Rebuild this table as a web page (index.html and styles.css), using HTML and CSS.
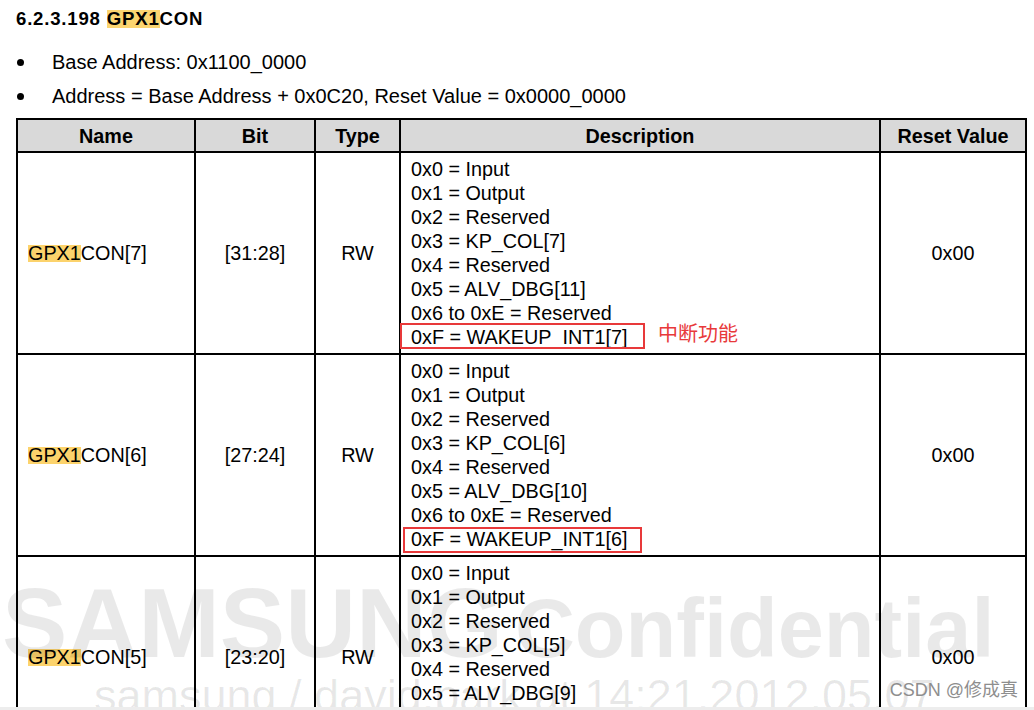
FILE: index.html
```html
<!DOCTYPE html>
<html lang="en">
<head>
<meta charset="utf-8">
<title>GPX1CON</title>
<link rel="stylesheet" href="styles.css">
</head>
<body>
<h1 class="title">6.2.3.198 <span class="hl hl-title">GPX1</span>CON</h1>
<ul class="facts">
  <li class="fact"><span class="dot"></span><span>Base Address: 0x1100_0000</span></li>
  <li class="fact"><span class="dot"></span><span>Address = Base Address + 0x0C20, Reset Value = 0x0000_0000</span></li>
</ul>
<table class="reg">
  <thead>
    <tr>
      <th class="c-name">Name</th>
      <th class="c-bit">Bit</th>
      <th class="c-type">Type</th>
      <th class="c-desc">Description</th>
      <th class="c-reset">Reset Value</th>
    </tr>
  </thead>
  <tbody>
    <tr>
      <td class="name"><span class="hl">GPX1</span>CON[7]</td>
      <td class="mid">[31:28]</td>
      <td class="mid">RW</td>
      <td class="desc">
        <div class="opt">0x0 = Input</div>
        <div class="opt">0x1 = Output</div>
        <div class="opt">0x2 = Reserved</div>
        <div class="opt">0x3 = KP_COL[7]</div>
        <div class="opt">0x4 = Reserved</div>
        <div class="opt">0x5 = ALV_DBG[11]</div>
        <div class="opt">0x6 to 0xE = Reserved</div>
        <div class="opt flag flag-a">0xF = WAKEUP_INT1[7]<span class="note">中断功能</span></div>
      </td>
      <td class="mid">0x00</td>
    </tr>
    <tr>
      <td class="name"><span class="hl">GPX1</span>CON[6]</td>
      <td class="mid">[27:24]</td>
      <td class="mid">RW</td>
      <td class="desc">
        <div class="opt">0x0 = Input</div>
        <div class="opt">0x1 = Output</div>
        <div class="opt">0x2 = Reserved</div>
        <div class="opt">0x3 = KP_COL[6]</div>
        <div class="opt">0x4 = Reserved</div>
        <div class="opt">0x5 = ALV_DBG[10]</div>
        <div class="opt">0x6 to 0xE = Reserved</div>
        <div class="opt flag flag-b">0xF = WAKEUP_INT1[6]</div>
      </td>
      <td class="mid">0x00</td>
    </tr>
    <tr>
      <td class="name"><span class="hl">GPX1</span>CON[5]</td>
      <td class="mid">[23:20]</td>
      <td class="mid">RW</td>
      <td class="desc">
        <div class="opt">0x0 = Input</div>
        <div class="opt">0x1 = Output</div>
        <div class="opt">0x2 = Reserved</div>
        <div class="opt">0x3 = KP_COL[5]</div>
        <div class="opt">0x4 = Reserved</div>
        <div class="opt">0x5 = ALV_DBG[9]</div>
        <div class="opt">0x6 to 0xE = Reserved</div>
        <div class="opt">0xF = WAKEUP_INT1[5]</div>
      </td>
      <td class="mid">0x00</td>
    </tr>
  </tbody>
</table>
<div class="wm" aria-hidden="true">
  <div class="wm-big"><span class="wm-a">SAMSUNG</span><span class="wm-b">Confidential</span></div>
  <div class="wm-small">samsung / david.park at 14:21,2012.05.07</div>
</div>
<div class="csdn">CSDN @修成真</div>
<div class="hbar"></div>
</body>
</html>
```

FILE: styles.css
```css
html, body {
  margin: 0;
  padding: 0;
  overflow: hidden;
  background: #fff;
}
body {
  font-family: "Liberation Sans", Arial, "Noto Sans CJK SC", sans-serif;
  color: #000;
  height: 710px;
  position: relative;
}
.title {
  margin: 7px 0 0 16px;
  font-size: 18.6px;
  line-height: 24px;
  font-weight: bold;
  letter-spacing: 0.8px;
}
.hl {
  background: linear-gradient(to bottom, transparent 15%, #fcd36c 15%, #fcd36c 90%, transparent 90%);
}
.hl-title {
  background: linear-gradient(to bottom, transparent 8%, #fcd570 8%, #fcd570 96%, transparent 96%);
}
.facts {
  list-style: none;
  margin: 14px 0 0 0;
  padding: 0;
  font-size: 20px;
  line-height: 34px;
}
.fact {
  display: flex;
  align-items: center;
}
.dot {
  width: 7px;
  height: 7px;
  border-radius: 50%;
  background: #000;
  margin-left: 17px;
  margin-right: 28px;
  flex: none;
}
.reg {
  margin: 5px 0 0 16px;
  border-collapse: separate;
  border-spacing: 2px;
  background: #000;
  table-layout: fixed;
  width: 1011px;
  font-size: 19.8px;
}
.reg th {
  background: #d9d9d9;
  font-weight: bold;
  line-height: 30px;
  padding: 1px 0 0;
  height: 31px;
  text-align: center;
  box-sizing: border-box;
}
.c-name { width: 176px; }
.c-bit { width: 118px; }
.c-type { width: 83px; }
.c-desc { width: 478px; }
.c-reset { width: 144px; }
.reg td {
  background: #fff;
  padding: 4px 10px;
  line-height: 24px;
  vertical-align: middle;
}
.reg td.mid {
  text-align: center;
}
.opt {
  white-space: nowrap;
}
.flag {
  position: relative;
}
.flag::before {
  content: "";
  position: absolute;
  box-sizing: border-box;
  border: 2px solid #e8393a;
  height: 26px;
}
.flag-a::before {
  left: -11px;
  top: -2px;
  width: 245px;
}
.flag-b::before {
  left: -8px;
  top: 0;
  width: 239px;
}
.note {
  position: absolute;
  left: 247px;
  top: -4px;
  color: #e8393a;
  font-family: "Noto Sans CJK SC", sans-serif;
  font-size: 20px;
  line-height: 24px;
}
.wm {
  position: absolute;
  left: 2px;
  top: 574px;
  pointer-events: none;
  color: rgba(0, 0, 0, 0.085);
  white-space: nowrap;
}
.wm-big {
  font-weight: bold;
  font-size: 98px;
  line-height: 98px;
}
.wm-b {
  font-size: 83px;
  margin-left: 12px;
}
.wm-small {
  font-size: 45px;
  line-height: 45px;
  margin: -5px 0 0 92px;
  color: rgba(0, 0, 0, 0.09);
}
.csdn {
  position: absolute;
  right: 16px;
  top: 679px;
  font-size: 18px;
  line-height: 22px;
  color: #8e8e8e;
  font-family: "Liberation Sans", "Noto Sans CJK SC", sans-serif;
}
.hbar {
  position: fixed;
  left: 0;
  right: 0;
  bottom: 0;
  height: 3px;
  background: #ededed;
}
```
